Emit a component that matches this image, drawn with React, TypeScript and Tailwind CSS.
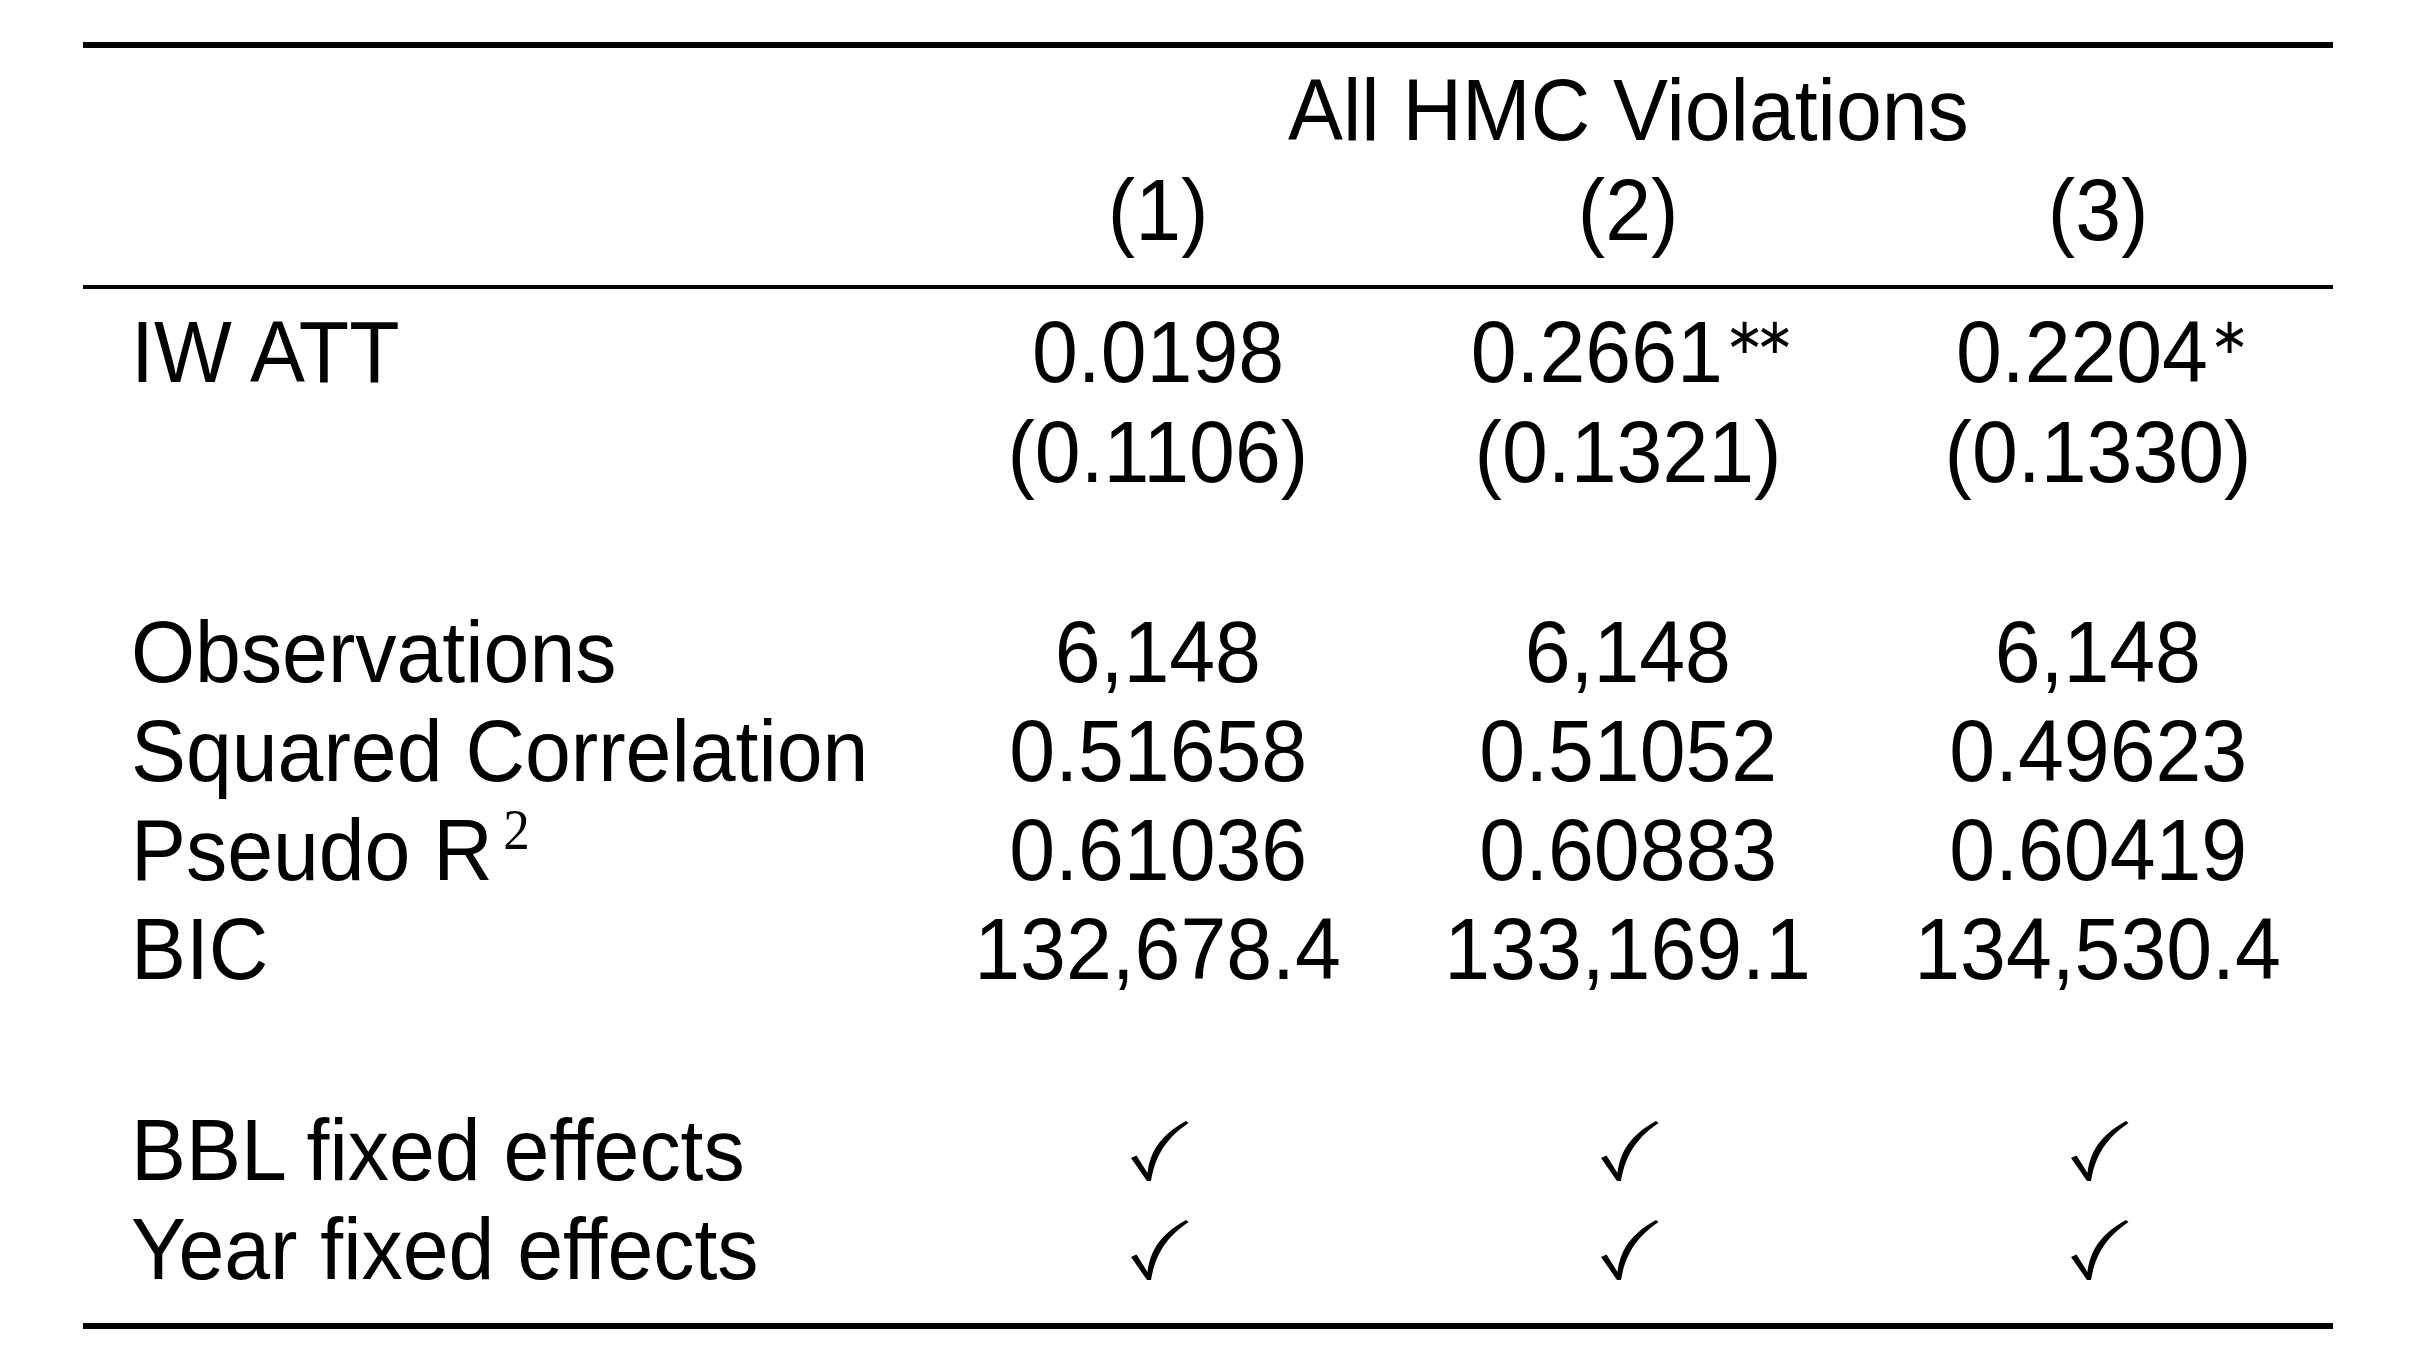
import React from "react";

const LBL = "inline-block origin-left scale-x-[0.947]";
const NUM = "inline-block scale-x-[0.947]";

function Check() {
  return (
    <svg width="58" height="60" viewBox="0 0 58 60" className="block mx-auto mt-[21px] translate-x-[2px]">
      <path
        d="M0 37 L5.5 34.5 L16.5 52 C18.5 37 24 17 55 0 L57.5 2 C31 20 23.5 40 20 60 L16 60 Z"
        fill="black"
      />
    </svg>
  );
}

function Stars({ n }: { n: number }) {
  return (
    <span className="relative bottom-[29px] font-['DejaVu_Sans',sans-serif] text-[50px] leading-none tracking-[-10px] ml-[2px]">
      {n === 2 ? "∗∗" : "∗"}
    </span>
  );
}

type RowProps = {
  label?: React.ReactNode;
  cells?: React.ReactNode[];
  hc: string;
};

function Row({ label, cells, hc }: RowProps) {
  return (
    <div className={`grid grid-cols-[840px_470px_470px_470px] ${hc}`}>
      <div className="pl-[48px] whitespace-nowrap">
        {label !== undefined ? <span className={LBL}>{label}</span> : null}
      </div>
      {(cells ?? ["", "", ""]).map((c, i) => (
        <div key={i} className="text-center whitespace-nowrap">
          {typeof c === "string" ? <span className={NUM}>{c}</span> : c}
        </div>
      ))}
    </div>
  );
}

export default function App() {
  return (
    <div className="min-h-[1371px] w-[2416px] bg-white text-black font-['Liberation_Sans',Arial,sans-serif] text-[87px] pt-[42px]">
      <div className="ml-[83px] w-[2250px]">
        <div className="h-[6px] bg-black" />

        <div className="mt-[12px] grid grid-cols-[840px_1410px] h-[100px] leading-[100px]">
          <div />
          <div className="text-center whitespace-nowrap">
            <span className={NUM}>All HMC Violations</span>
          </div>
        </div>
        <Row hc="h-[100px] leading-[100px]" cells={["(1)", "(2)", "(3)"]} />

        <div className="mt-[25px] h-[4px] bg-black" />

        <div className="mt-[13px]">
          <Row
            hc="h-[100px] leading-[100px]"
            label="IW ATT"
            cells={[
              "0.0198",
              <span key="a" className={NUM}>
                0.2661
                <Stars n={2} />
              </span>,
              <span key="b" className={NUM}>
                0.2204
                <Stars n={1} />
              </span>,
            ]}
          />
          <Row hc="h-[100px] leading-[100px]" cells={["(0.1106)", "(0.1321)", "(0.1330)"]} />
          <div className="h-[100px]" />
          <Row hc="h-[99px] leading-[99px]" label="Observations" cells={["6,148", "6,148", "6,148"]} />
          <Row
            hc="h-[99px] leading-[99px]"
            label="Squared Correlation"
            cells={["0.51658", "0.51052", "0.49623"]}
          />
          <Row
            hc="h-[99px] leading-[99px]"
            label={
              <>
                Pseudo R
                <span className="relative bottom-[31px] font-['Liberation_Serif',serif] text-[56px] leading-none ml-[11px]">
                  2
                </span>
              </>
            }
            cells={["0.61036", "0.60883", "0.60419"]}
          />
          <Row
            hc="h-[99px] leading-[99px]"
            label="BIC"
            cells={["132,678.4", "133,169.1", "134,530.4"]}
          />
          <div className="h-[102px]" />
          <Row
            hc="h-[99px] leading-[99px]"
            label="BBL fixed effects"
            cells={[<Check key="1" />, <Check key="2" />, <Check key="3" />]}
          />
          <Row
            hc="h-[99px] leading-[99px]"
            label="Year fixed effects"
            cells={[<Check key="1" />, <Check key="2" />, <Check key="3" />]}
          />
        </div>

        <div className="mt-[25px] h-[6px] bg-black" />
      </div>
    </div>
  );
}
